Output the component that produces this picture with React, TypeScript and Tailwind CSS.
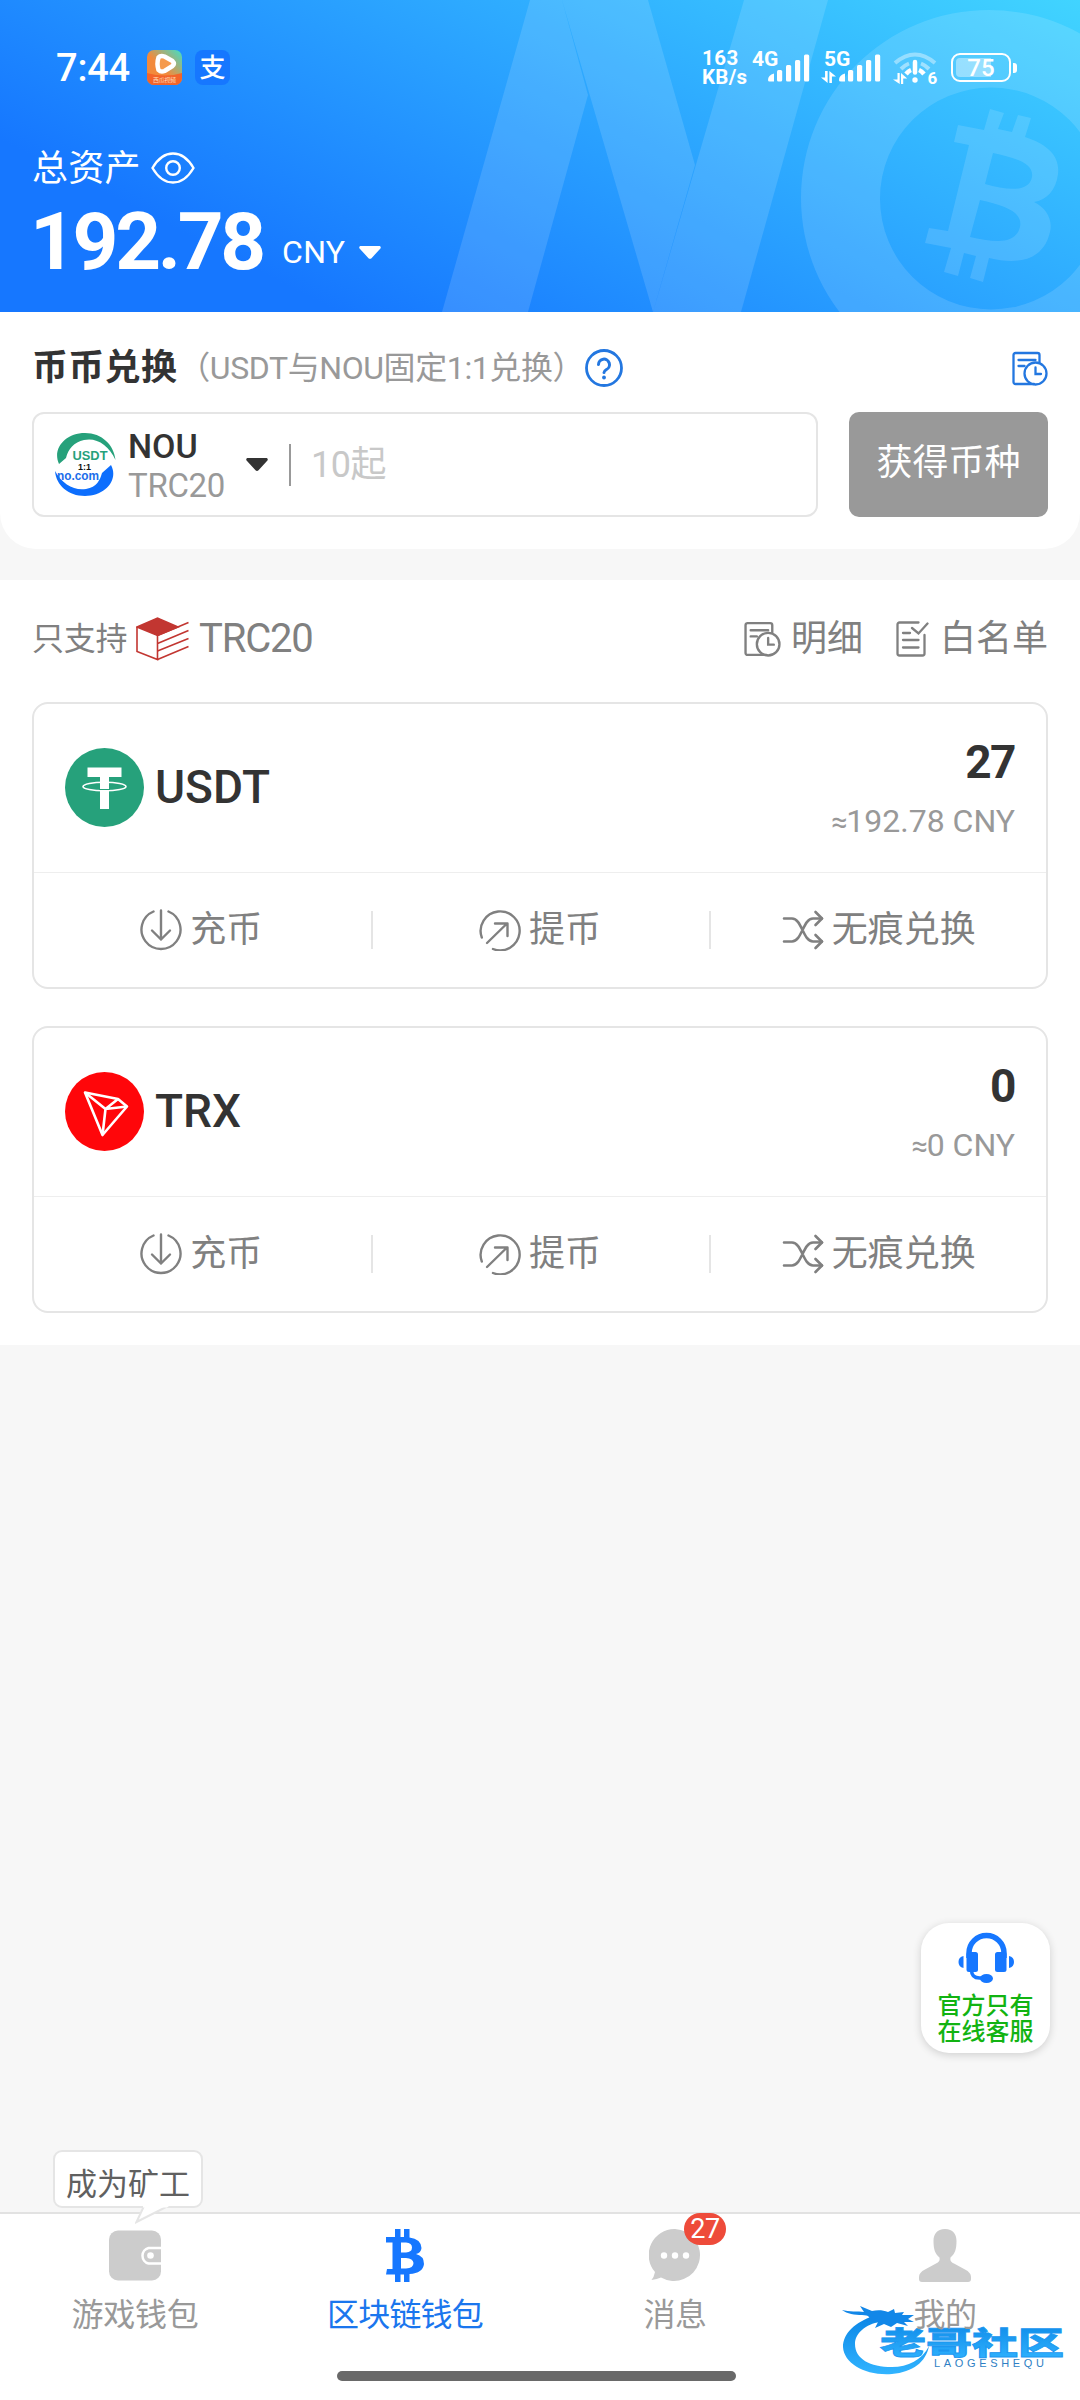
import React from "react";

type IconProps = { className?: string };

function HistoryIcon({ className }: IconProps) {
  return (
    <svg viewBox="0 0 36 34" className={className} fill="none" stroke="currentColor" strokeWidth="2.300" strokeLinecap="round">
      <path d="M22 32.500H3.500a2 2 0 0 1-2-2v-27a2 2 0 0 1 2-2h22a2 2 0 0 1 2 2V11" />
      <path d="M6.500 8.500h17M6.500 14.500h6" />
      <circle cx="23.500" cy="22" r="11" />
      <path d="M23.500 16v6.500h5.500" />
    </svg>
  );
}

function WhitelistIcon({ className }: IconProps) {
  return (
    <svg viewBox="0 0 33 36" className={className} fill="none" stroke="currentColor" strokeWidth="2.300" strokeLinecap="round">
      <path d="M22.500 1.500H3.500a2 2 0 0 0-2 2v29a2 2 0 0 0 2 2h23a2 2 0 0 0 2-2V14" />
      <path d="M7 12h7M7 19h15.500M7 26.500h15.500" />
      <path d="M16 7l6.500 5.500L31.500 2.500" />
    </svg>
  );
}

function DepositIcon() {
  return (
    <svg viewBox="0 0 42 42" className="size-[42px]" fill="none" stroke="currentColor" strokeWidth="2.400" strokeLinecap="round" strokeLinejoin="round">
      <path d="M13.500 2.500a19.500 19.500 0 1 0 15 0" />
      <path d="M21 1.500v29M12 21.500l9 9 9-9" />
    </svg>
  );
}

function WithdrawIcon() {
  return (
    <svg viewBox="0 0 42 42" className="size-[42px]" fill="none" stroke="currentColor" strokeWidth="2.400" strokeLinecap="round" strokeLinejoin="round">
      <path d="M2.800 28.500A19.500 19.500 0 1 1 14 40" />
      <path d="M8 34L28 14.500M16 14.500h12.500V27" />
    </svg>
  );
}

function SwapIcon() {
  return (
    <svg viewBox="0 0 42 40" className="h-[40px] w-[42px]" fill="none" stroke="currentColor" strokeWidth="2.600" strokeLinecap="round" strokeLinejoin="round">
      <path d="M2 8.500h8c10 0 11 23 21 23h9M2 31.500h8c10 0 11-23 21-23h9" />
      <path d="M33.500 2l6.500 6.500-6.500 6.500M33.500 25l6.500 6.500-6.500 6.500" />
    </svg>
  );
}

function TetherLogo() {
  return (
    <svg viewBox="0 0 79 79" className="size-[79px]">
      <circle cx="39.500" cy="39.500" r="39.500" fill="#26a17b" />
      <path d="M22.500 19.500H56.500V29H44V61H35V29H22.500Z" fill="#fff" />
      <ellipse cx="39.500" cy="38.500" rx="21.500" ry="4.300" fill="none" stroke="#fff" strokeWidth="1.600" />
      <path d="M35 34h9v6.500h-9z" fill="#fff" />
      <path d="M34 41.500h11" stroke="#26a17b" strokeWidth="1" />
    </svg>
  );
}

function TronLogo() {
  return (
    <svg viewBox="0 0 79 79" className="size-[79px]" fill="none" stroke="#fff" strokeWidth="2.600" strokeLinejoin="round">
      <circle cx="39.500" cy="39.500" r="39.500" fill="#ff060a" stroke="none" />
      <path d="M20 20.500L53 27l9 7.500L37.500 63Z" />
      <path d="M20 20.500L40.500 37 53 27M40.500 37L62 34.500M40.500 37l-3 26" />
    </svg>
  );
}

function CubeLogo() {
  return (
    <svg viewBox="0 0 53 44" className="h-[44px] w-[53px]" fill="none" stroke="#c23631" strokeWidth="1.600">
      <path d="M1 10L21.500 1 42 10 21.500 18.500Z" fill="#c23631" />
      <path d="M1 10v24.500L21.500 42.500V18" />
      <path d="M21.500 18.500L52.500 5.500M21.500 26.500L52.500 13.500M21.500 34L52.500 21.500M21.500 42.500L52.500 29.500" />
    </svg>
  );
}

function NouLogo() {
  return (
    <svg viewBox="0 0 62 65" className="h-[65px] w-[62px]">
      <path d="M5 32C-2 17 11 1 31 1 48 1 60 13 61.500 28 55 13 42 5 30 8 20 10 14 17 12 26Z" fill="#26a17b" />
      <path d="M57 33C65 48 51 64 31 64 14 64 2 53 1 39 8 52 20 59 32 57 43 55 46 48 48 41Z" fill="#0d6efd" />
      <text x="18.500" y="27.500" fontFamily="Liberation Sans" fontWeight="700" fontSize="13" textLength="35" lengthAdjust="spacingAndGlyphs" fill="#26a17b">USDT</text>
      <text x="24" y="37.500" fontFamily="Liberation Sans" fontWeight="700" fontSize="9.500" textLength="13" lengthAdjust="spacingAndGlyphs" fill="#111">1:1</text>
      <text x="3" y="47.500" fontFamily="Liberation Sans" fontWeight="700" fontSize="13" textLength="42" lengthAdjust="spacingAndGlyphs" fill="#1a6dea">no.com</text>
    </svg>
  );
}

function Triangle({ className }: IconProps) {
  return (
    <svg viewBox="0 0 22 13" className={className} fill="currentColor">
      <path d="M2 0h18c1.800 0 2.300 1.500 1.200 2.700l-8.700 9.500c-.8.900-2.200.9-3 0L.8 2.700C-.3 1.500.2 0 2 0Z" />
    </svg>
  );
}

function HeaderArt() {
  return (
    <svg viewBox="0 0 1080 312" className="absolute inset-0 h-[312px] w-[1080px]">
      <g fill="#fff" fillOpacity=".13">
        <path d="M530 0h32l26 95-60 217h-86z" />
        <path d="M562 0h86l47 165-42 147z" />
        <path d="M744 0h84l-87 312h-88z" />
        <path fillRule="evenodd" d="M801 198a188 188 0 1 0 376 0a188 188 0 1 0-376 0M880 198.500a111 111 0 1 0 222 0a111 111 0 1 0-222 0" />
        <path
          fillRule="evenodd"
          d="M958 125L984 130 990 109 1004 113 998 129 1012 132 1018 115 1031 118 1025 137C1050 145 1060 158 1058 174 1056 191 1046 200 1034 202 1046 208 1053 219 1050 232 1044 258 1022 266 989 258L983 282 970 278 976 256 964 253 958 276 944 272 951 248 925 243 929 228 948 231 969 145 954 142ZM993 153L985 184C1007 190 1029 193 1032 177 1034 162 1014 158 993 153ZM980 200L970 237C990 241 1015 247 1020 227 1023 212 1006 206 980 200Z"
        />
      </g>
    </svg>
  );
}

function SignalBars() {
  return (
    <svg viewBox="0 0 44 28" className="h-[28px] w-[44px]" fill="#fff">
      <path d="M1 26q0-5 6-6.500V27.500H2.500Q1 27.500 1 26z" />
      <rect x="10" y="16" width="5.200" height="11.500" rx="1.500" />
      <rect x="19" y="11" width="5.200" height="16.500" rx="1.500" />
      <rect x="28" y="6" width="5.200" height="21.500" rx="1.500" />
      <rect x="37" y="0.500" width="5.200" height="27" rx="1.500" />
    </svg>
  );
}

function DataArrows({ className }: IconProps) {
  return (
    <svg viewBox="0 0 14 11" className={className} fill="#fff">
      <path d="M3.800 0h2.400v11L0 6h3.800zM7.800 11h2.400V5H14L7.800 0z" />
    </svg>
  );
}

function StatusBar() {
  return (
    <div className="relative flex h-[88px] items-start pt-[50px] pl-[56px] text-white">
      <span className="w-[90px] text-[38px] leading-[36px] font-medium tracking-[-0.2px]">7:44</span>
      <svg viewBox="0 0 35 35" className="ml-[1px] size-[35px]">
        <defs>
          <linearGradient id="play" x1="0" y1="1" x2="1" y2="0">
            <stop offset=".45" stopColor="#f28a3c" />
            <stop offset="1" stopColor="#3fe0c8" />
          </linearGradient>
        </defs>
        <rect width="35" height="35" rx="7" fill="url(#play)" />
        <path d="M0 23q18 5 35 0v5a7 7 0 0 1-7 7H7a7 7 0 0 1-7-7z" fill="#f3642a" />
        <path d="M11.500 7.500q2-2.500 6-1l8 4.500q2.500 2.500 0 5l-8 5q-3.500 1.500-6-1-2-6.500 0-12.500z" fill="#f59a4d" stroke="#fff" strokeWidth="4.500" strokeLinejoin="round" />
        <text x="6" y="32" fontSize="6" fontFamily="Noto Sans CJK SC" fill="#ffd9b8" textLength="23">西瓜视频</text>
      </svg>
      <div className="ml-[13px] flex size-[35px] items-center justify-center rounded-[8px] bg-[#1677ff] text-[26px] leading-none font-medium">支</div>

      <div className="ml-[472px] w-[50px] text-[20.500px] leading-[19px] font-bold">
        <div className="-mt-[1px] tracking-[0.5px]">163</div>
        <div className="tracking-[0.3px]">KB/s</div>
      </div>
      <div className="relative h-[36px] w-[72px]">
        <span className="absolute -top-[1px] left-0 text-[21px] leading-[20px] font-bold">4G</span>
        <div className="absolute top-[4px] left-[15px]"><SignalBars /></div>
      </div>
      <div className="relative h-[36px] w-[69px]">
        <span className="absolute -top-[1px] left-0 text-[21px] leading-[20px] font-bold">5G</span>
        <DataArrows className="absolute top-[21px] -left-[3px] h-[12px] w-[15px]" />
        <div className="absolute top-[4px] left-[14px]"><SignalBars /></div>
      </div>
      <svg viewBox="0 0 46 36" className="mt-[1px] h-[36px] w-[46px]" fill="none" stroke="#fff">
        <path d="M2 12q20-17 40 0" strokeWidth="4" strokeOpacity=".4" />
        <path d="M8 18q4-4 8-5.500M36 18q-4-4-8-5.500" strokeWidth="4" strokeOpacity=".45" />
        <path d="M13 23q2.500-3 5-4M31 23q-2.500-3-5-4" strokeWidth="4.500" />
        <path d="M22 11v10.500" strokeWidth="4.500" strokeLinecap="round" />
        <circle cx="22" cy="29" r="2.700" fill="#fff" stroke="none" />
        <path d="M4.500 22h2.200v11L0 28.500h4.500zM8 33h2.200v-5.500h4L8 22z" fill="#fff" stroke="none" />
        <text x="34.500" y="32.500" fontSize="17" fontWeight="700" fontFamily="Roboto" fill="#fff" stroke="none">6</text>
      </svg>
      <div className="mt-[3px] ml-[12px] flex items-center">
        <div className="flex h-[29px] w-[60px] items-center justify-center rounded-[9px] border-[2.5px] border-white p-[3px]">
          <div className="flex h-full w-full items-center justify-center rounded-[4px] bg-gradient-to-r from-white/40 from-70% to-transparent to-70% text-[24px] leading-none font-medium">75</div>
        </div>
        <div className="ml-[2px] h-[10px] w-[4px] rounded-r-[3px] bg-white" />
      </div>
    </div>
  );
}

function Header() {
  return (
    <header className="relative h-[312px] shrink-0 overflow-hidden bg-[linear-gradient(27deg,#1677ff_20%,#41d4ff_100%)] text-white">
      <HeaderArt />
      <StatusBar />
      <div className="relative mt-[55px] flex h-[50px] items-center pl-[32px]">
        <span className="pt-[2px] text-[36px] leading-[50px] tracking-[0.3px]">总资产</span>
        <svg viewBox="0 0 44 32" className="ml-[10px] h-[32px] w-[44px]" fill="none" stroke="#fff" strokeWidth="2.400">
          <path d="M1.500 16Q10 1.500 22 1.500T42.500 16Q34 30.500 22 30.500T1.500 16Z" />
          <circle cx="22" cy="16" r="6.800" />
        </svg>
      </div>
      <div className="relative flex h-[80px] items-start pl-[30px]">
        <span className="w-[252px] pt-[1px] text-[80px] leading-[96px] font-bold tracking-[-3.300px]">192.78</span>
        <span className="pt-[39px] text-[32px] leading-[40px] tracking-[0.3px]">CNY</span>
        <Triangle className="mt-[53px] ml-[14px] h-[13px] w-[22px]" />
      </div>
    </header>
  );
}

function Exchange() {
  return (
    <section className="h-[237px] shrink-0 rounded-b-[36px] bg-white px-[32px]">
      <div className="flex h-[100px] items-center pt-[12px]">
        <h1 className="text-[36px] font-bold tracking-[0.3px]">币币兑换</h1>
        <span className="ml-[1px] text-[32px] tracking-[-0.4px] text-[#999]">（USDT与NOU固定1:1兑换）</span>
        <svg viewBox="0 0 38 38" className="ml-[1px] size-[38px]" fill="none" stroke="#2377e0" strokeLinecap="round">
          <circle cx="19" cy="19" r="17.500" strokeWidth="2.800" />
          <path d="M13.500 15.500a5.500 5.500 0 1 1 8 5q-2.500 1.500-2.500 3" strokeWidth="3" />
          <circle cx="19" cy="28.500" r="1.900" fill="#2377e0" stroke="none" />
        </svg>
        <HistoryIcon className="ml-auto h-[35px] w-[36px] text-[#2377e0]" />
      </div>
      <div className="flex gap-[31px]">
        <div className="flex h-[105px] w-[786px] items-center rounded-[12px] border-2 border-[#e5e5e5] pl-[20px]">
          <NouLogo />
          <div className="ml-[12px] w-[118px] pt-[3px]">
            <div className="text-[34px] leading-[38px] font-medium">NOU</div>
            <div className="text-[33px] leading-[41px] tracking-[-0.3px] text-[#999]">TRC20</div>
          </div>
          <Triangle className="h-[13px] w-[22px]" />
          <div className="ml-[21px] h-[42px] w-[2px] bg-[#999]" />
          <span className="ml-[20px] text-[36px] leading-[50px] tracking-[-0.5px] text-[#c8c8c8]">10起</span>
        </div>
        <button className="h-[105px] flex-1 rounded-[10px] bg-[#999] pb-[4px] text-[36px] text-white">获得币种</button>
      </div>
    </section>
  );
}

type AssetProps = { logo: React.ReactNode; name: string; amount: string; value: string };

function AssetCard({ logo, name, amount, value }: AssetProps) {
  return (
    <article className="flex h-[287px] flex-col rounded-[16px] border-2 border-[#e5e5e5]">
      <div className="flex h-[169px] items-center justify-between border-b border-[#eee] px-[31px]">
        <div className="flex items-center gap-[11px] pb-[2px]">
          {logo}
          <span className="text-[46px] font-medium">{name}</span>
        </div>
        <div className="pt-[6px] text-right">
          <div className="text-[46px] leading-[60px] font-bold tracking-[-1.500px]">{amount}</div>
          <div className="text-[32px] leading-[58px] text-[#999]">
            <span className="mr-[-1px] text-[29px]">{value.slice(0, 1)}</span>
            {value.slice(1)}
          </div>
        </div>
      </div>
      <div className="flex flex-1 items-center divide-x-2 divide-[#e5e5e5] text-[36px] leading-[38px] text-[#808080]">
        <div className="flex h-[38px] flex-1 items-center justify-center gap-[8px] pr-[2px]"><DepositIcon /><span>充币</span></div>
        <div className="flex h-[38px] flex-1 items-center justify-center gap-[8px] pr-[2px]"><WithdrawIcon /><span>提币</span></div>
        <div className="flex h-[38px] flex-1 items-center justify-center gap-[8px]"><SwapIcon /><span>无痕兑换</span></div>
      </div>
    </article>
  );
}

function Assets() {
  return (
    <section className="mt-[31px] h-[765px] shrink-0 bg-white px-[32px]">
      <div className="flex h-[122px] items-center pb-[5px] text-[#808080]">
        <span className="text-[32px] tracking-[-0.3px]">只支持</span>
        <div className="mr-[10px] ml-[9px]"><CubeLogo /></div>
        <span className="text-[40px] tracking-[-1.200px]">TRC20</span>
        <HistoryIcon className="mr-[10px] ml-auto h-[36px] w-[37px]" />
        <span className="text-[36px]">明细</span>
        <WhitelistIcon className="mr-[11px] ml-[33px] h-[36px] w-[33px]" />
        <span className="text-[36px]">白名单</span>
      </div>
      <div className="flex flex-col gap-[37px]">
        <AssetCard logo={<TetherLogo />} name="USDT" amount="27" value="≈192.78 CNY" />
        <AssetCard logo={<TronLogo />} name="TRX" amount="0" value="≈0 CNY" />
      </div>
    </section>
  );
}

function Support() {
  return (
    <div className="absolute top-[1923px] left-[921px] flex h-[130px] w-[129px] flex-col items-center rounded-[28px] bg-white pt-[9px] shadow-[0_2px_8px_rgba(0,0,0,0.16)]">
      <svg viewBox="0 0 56 52" className="h-[52px] w-[56px]" fill="#1677ff">
        <path d="M11 26v-5a17.500 17.500 0 0 1 35 0v5" fill="none" stroke="#1677ff" strokeWidth="5.500" />
        <rect x="8.500" y="20" width="11.500" height="20" rx="2.500" />
        <rect x="37" y="20" width="11.500" height="20" rx="2.500" />
        <path d="M5.500 24v12q-5-1-5-6t5-6zM51 24v12q5-1 5-6t-5-6z" />
        <path d="M13.500 38q0 8 8 8h5" fill="none" stroke="#1677ff" strokeWidth="3.500" />
        <ellipse cx="28.500" cy="46.500" rx="6.500" ry="4.500" />
      </svg>
      <div className="mt-[9px] text-center text-[24px] leading-[26px] font-medium text-[#12b312]">
        官方只有
        <br />
        在线客服
      </div>
    </div>
  );
}

function MinerTip() {
  return (
    <div className="absolute -top-[64px] left-[53px] flex h-[58px] w-[150px] items-center justify-center rounded-[9px] border-2 border-[#e5e5e5] bg-white pt-[12px] text-[31px] leading-[40px] text-[#606060]">
      成为矿工
      <svg viewBox="0 0 36 18" className="absolute top-[54px] left-[80px] h-[18px] w-[36px]">
        <path d="M9 0L1.500 16 33 0" fill="#fff" stroke="#e5e5e5" strokeWidth="2" />
        <path d="M8 0h26l-2 1.500H8z" fill="#fff" />
      </svg>
    </div>
  );
}

function TabBar() {
  return (
    <nav className="relative mt-auto h-[188px] border-t-2 border-[#e2e2e2] bg-white text-[32px] text-[#999]">
      <div className="grid grid-cols-4">
        <div className="flex flex-col items-center pt-[15px]">
          <svg viewBox="0 0 52 53" className="h-[53px] w-[52px]">
            <rect y="1.500" width="52" height="50" rx="9" fill="#ccc" />
            <path d="M52 19H39.500a8 8 0 0 0 0 15.500H52" fill="none" stroke="#fff" strokeWidth="2.500" />
            <circle cx="41.500" cy="26.500" r="3.300" fill="#fff" />
          </svg>
          <span className="mt-[10px] leading-[46px] tracking-[-0.3px]">游戏钱包</span>
        </div>
        <div className="flex flex-col items-center pt-[15px] text-[#1a76ee]">
          <svg viewBox="0 0 40 53" className="h-[53px] w-[40px]" fill="#1677ff">
            <path
              fillRule="evenodd"
              d="M1 8H10V0H15.500V8H19V0H24.500V8.500Q36 10 36.500 19 36 24 31 25 39 27 39 35 38 44 24.500 45V53H19V45.500H15.500V53H10V45.500H1L2 40H7.500V13.500H1ZM16 13.500V23.500H21Q27 23 27 18.500 27 14 21 13.500ZM16 29V39.500H21Q28.500 39 28.500 34 28 29.500 21 29Z"
            />
          </svg>
          <span className="mt-[10px] leading-[46px] tracking-[-0.8px]">区块链钱包</span>
        </div>
        <div className="flex flex-col items-center pt-[15px]">
          <div className="relative">
            <svg viewBox="0 0 52 53" className="h-[53px] w-[52px]">
              <path d="M26 0a26 26 0 1 1-14 48.500Q8 50 2.500 51 5 48 6 43A26 26 0 0 1 26 0Z" fill="#ccc" />
              <circle cx="15" cy="26.500" r="3.200" fill="#fff" />
              <circle cx="26" cy="26.500" r="3.200" fill="#fff" />
              <circle cx="37" cy="26.500" r="3.200" fill="#fff" />
            </svg>
            <span className="absolute -top-[16px] left-[35px] flex h-[32px] w-[42px] items-center justify-center rounded-full bg-[#ee4b3a] text-[27px] leading-none tracking-[-0.5px] text-white">27</span>
          </div>
          <span className="mt-[10px] leading-[46px] tracking-[-0.5px]">消息</span>
        </div>
        <div className="flex flex-col items-center pt-[15px]">
          <svg viewBox="0 0 52 53" className="h-[53px] w-[52px]" fill="#ccc">
            <path d="M26 0C34 0 37.500 5 37.500 12 37.500 20 36 25 31.500 28.500 31 32 32 33 35 34.500L46 40.500Q52 43.500 52 48V50Q52 53 49 53H3Q0 53 0 50V48Q0 43.500 6 40.500L17 34.500C20 33 21 32 20.500 28.500 16 25 14.500 20 14.500 12 14.500 5 18 0 26 0Z" />
          </svg>
          <span className="relative z-10 mt-[10px] leading-[46px] tracking-[-0.5px]">我的</span>
        </div>
      </div>
      <div className="mt-[33px] ml-[337px] h-[10px] w-[399px] rounded-full bg-[#696969]" />
      <MinerTip />
    </nav>
  );
}

function CommunityMark() {
  return (
    <div className="absolute top-[2302px] left-[842px] h-[74px] w-[224px]">
      <svg viewBox="0 0 224 74" className="absolute inset-0 h-full w-full">
        <defs>
          <linearGradient id="mark" x1="0" y1="0" x2="0" y2="1">
            <stop offset="0" stopColor="#0b86e6" />
            <stop offset="1" stopColor="#31b4ff" />
          </linearGradient>
        </defs>
        <path d="M31 14C14 20 1 31 1 45 2 62 24 74 50 72 71 70 84 60 87 44 80 58 66 65 50 65 28 65 13 57 13 42 13 31 24 22 38 20Z" fill="url(#mark)" />
        <path d="M0 8C7 10 16 9 22 10L18 4 30 9C35 8 41 8 46 10L52 7 53 11 62 10 60 13 72 13 66 17 72 20 62 20 66 24 55 21 49 25 42 22 33 26 36 20 25 19C30 16 27 13 20 13 13 13 5 12 0 8Z" fill="#1287e8" />
        <text x="38" y="51.500" fontFamily="Noto Sans CJK SC" fontWeight="900" fontSize="31" textLength="184" lengthAdjust="spacingAndGlyphs" fill="url(#mark)" stroke="#1c97f0" strokeWidth="0.800">老哥社区</text>
        <text x="92" y="65" fontFamily="Liberation Sans" fontSize="11" textLength="110" fill="#2f7fc4">LAOGESHEQU</text>
      </svg>
    </div>
  );
}

export default function App() {
  return (
    <main className="relative flex h-[2400px] w-[1080px] flex-col overflow-hidden bg-[#f7f7f7] font-['Roboto','Noto_Sans_CJK_SC',sans-serif] text-[#333]">
      <Header />
      <Exchange />
      <Assets />
      <Support />
      <TabBar />
      <CommunityMark />
    </main>
  );
}
